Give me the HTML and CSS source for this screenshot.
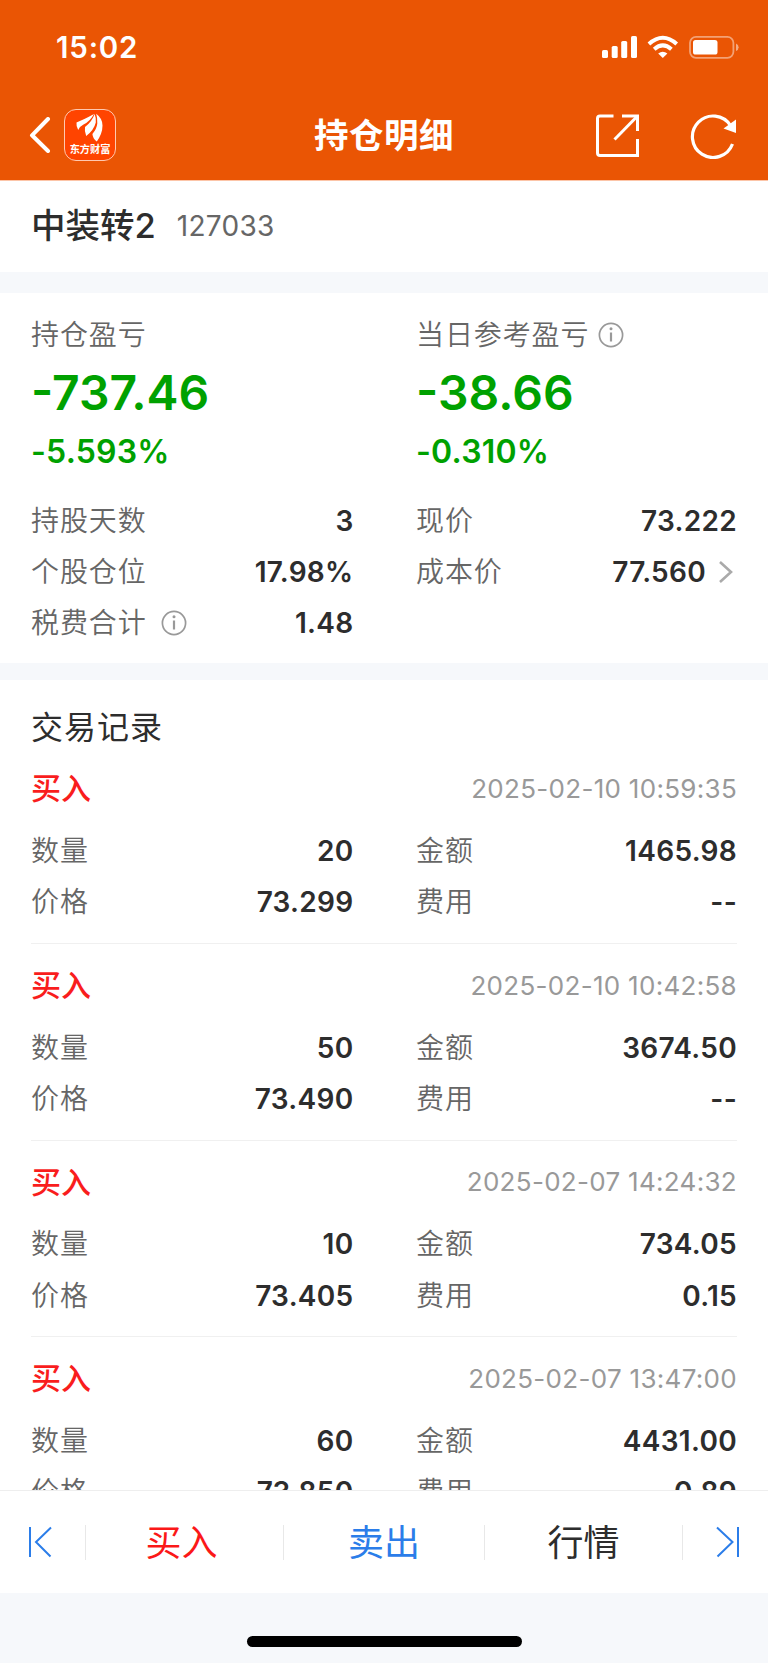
FILE: index.html
```html
<!DOCTYPE html>
<html lang="zh-CN">
<head>
    <meta charset="UTF-8">
    <meta name="viewport" content="width=device-width, initial-scale=1.0">
    <title>持仓明细</title>
    <link rel="stylesheet" href="styles.css">
</head>
<body>
    <div class="screen">
        <header class="header">
            <div class="status-bar">
                <span class="time">15:02</span>
                <svg class="status-icons" width="138" height="26" viewBox="0 0 138 26">
                    <g fill="#fff">
                        <rect x="0" y="15" width="6" height="8" rx="1.6"/>
                        <rect x="9.7" y="11" width="6" height="12" rx="1.6"/>
                        <rect x="19.2" y="6" width="6" height="17" rx="1.6"/>
                        <rect x="29" y="1" width="6" height="22" rx="1.6"/>
                        <path d="M60.8 23 L56.2 18.6 Q60.8 14.8 65.4 18.6 Z"/>
                        <rect x="91" y="5" width="24.5" height="14.6" rx="2.6"/>
                    </g>
                    <g fill="none" stroke="#fff" stroke-width="4">
                        <path d="M46.9 8.9 Q60.8 -3.4 74.7 8.9"/>
                        <path d="M52.2 14.2 Q60.8 6.6 69.4 14.2"/>
                    </g>
                    <rect x="88" y="1.8" width="43.4" height="21" rx="6" fill="none" stroke="#fff" stroke-opacity=".45" stroke-width="1.8"/>
                    <path d="M134 8.5 Q136.6 9.5 136.6 12.2 Q136.6 15 134 16 Z" fill="#fff" fill-opacity=".5"/>
                </svg>
            </div>
            <div class="nav">
                <div class="nav-left">
                    <svg class="back" width="22" height="36" viewBox="0 0 22 36" fill="none" stroke="#fff" stroke-width="4" stroke-linecap="round" stroke-linejoin="round">
                        <path d="M19 2 L3 18.3 L19 34"/>
                    </svg>
                    <div class="logo">
                        <svg width="28" height="29" viewBox="0 0 28 29" fill="#fff">
                            <path d="M.5 9.5 Q8 6.500 18 1 Q14 8.500 7.500 11.500 Q3.500 13.500 2.200 17 Q0 13.500 .5 9.500 Z"/>
                            <path d="M18.600 1 Q16.500 8 9 14 Q8.300 17.500 10.200 23 Q18 17 19.800 9.500 Q20.300 5 18.600 1 Z"/>
                            <path d="M20.200 .8 Q26.500 5.500 26.500 12.500 Q26.500 20.500 20.800 28.500 Q16.800 25.500 16.400 21 Q20.700 16 21.300 10.500 Q21.500 5 20.200 .8 Z"/>
                        </svg>
                        <span>东方财富</span>
                    </div>
                </div>
                <h1 class="title">持仓明细</h1>
                <div class="nav-right">
                    <svg width="46" height="46" viewBox="0 0 46 46" fill="none" stroke="#fff" stroke-width="3">
                        <path d="M19.5 3 H6 Q3.5 3 3.5 5.5 V40 Q3.5 42.5 6 42.5 H43.5 V26"/>
                        <path d="M28 3 H43.5 V18"/>
                        <path d="M43 3.5 L20.5 26.5"/>
                    </svg>
                    <svg width="48" height="46" viewBox="0 0 48 46">
                        <path d="M42.5 31 A20.7 20.7 0 1 1 40.5 12.5" fill="none" stroke="#fff" stroke-width="3.2"/>
                        <path d="M46 6.5 V20 L33.5 15.5 Z" fill="#fff"/>
                    </svg>
                </div>
            </div>
        </header>

        <section class="stock">
            <h2 class="stock-name">中装转2</h2>
            <span class="stock-code">127033</span>
        </section>

        <section class="summary">
            <div class="columns profit">
                <div>
                    <div class="label">持仓盈亏</div>
                    <div class="amount">-737.46</div>
                    <div class="percent">-5.593%</div>
                </div>
                <div>
                    <div class="label">当日参考盈亏
                        <svg class="info" width="26" height="26" viewBox="0 0 26 26"><circle cx="13" cy="13" r="11.6"/><path d="M13 10.5 V19.5"/><circle class="dot" cx="13" cy="6.8" r="1.5"/></svg>
                    </div>
                    <div class="amount">-38.66</div>
                    <div class="percent">-0.310%</div>
                </div>
            </div>
            <div class="columns">
                <div class="row"><span class="label">持股天数</span><span class="value">3</span></div>
                <div class="row"><span class="label">现价</span><span class="value">73.222</span></div>
                <div class="row"><span class="label">个股仓位</span><span class="value">17.98%</span></div>
                <div class="row">
                    <span class="label">成本价</span>
                    <span class="value link">77.560
                        <svg width="16" height="24" viewBox="0 0 16 24" fill="none" stroke="#aaa" stroke-width="2.6"><path d="M2 2 L13 12 L2 22"/></svg>
                    </span>
                </div>
                <div class="row">
                    <span class="label spaced">税费合计
                        <svg class="info" width="26" height="26" viewBox="0 0 26 26"><circle cx="13" cy="13" r="11.6"/><path d="M13 10.5 V19.5"/><circle class="dot" cx="13" cy="6.8" r="1.5"/></svg>
                    </span>
                    <span class="value">1.48</span>
                </div>
            </div>
        </section>

        <main class="records">
            <h2 class="records-title">交易记录</h2>
            <article class="record">
                <div class="record-head"><span class="buy">买入</span><time>2025-02-10 10:59:35</time></div>
                <div class="columns">
                    <div class="row"><span class="label">数量</span><span class="value">20</span></div>
                    <div class="row"><span class="label">金额</span><span class="value">1465.98</span></div>
                    <div class="row"><span class="label">价格</span><span class="value">73.299</span></div>
                    <div class="row"><span class="label">费用</span><span class="value">--</span></div>
                </div>
            </article>
            <article class="record">
                <div class="record-head"><span class="buy">买入</span><time>2025-02-10 10:42:58</time></div>
                <div class="columns">
                    <div class="row"><span class="label">数量</span><span class="value">50</span></div>
                    <div class="row"><span class="label">金额</span><span class="value">3674.50</span></div>
                    <div class="row"><span class="label">价格</span><span class="value">73.490</span></div>
                    <div class="row"><span class="label">费用</span><span class="value">--</span></div>
                </div>
            </article>
            <article class="record">
                <div class="record-head"><span class="buy">买入</span><time>2025-02-07 14:24:32</time></div>
                <div class="columns">
                    <div class="row"><span class="label">数量</span><span class="value">10</span></div>
                    <div class="row"><span class="label">金额</span><span class="value">734.05</span></div>
                    <div class="row"><span class="label">价格</span><span class="value">73.405</span></div>
                    <div class="row"><span class="label">费用</span><span class="value">0.15</span></div>
                </div>
            </article>
            <article class="record">
                <div class="record-head"><span class="buy">买入</span><time>2025-02-07 13:47:00</time></div>
                <div class="columns">
                    <div class="row"><span class="label">数量</span><span class="value">60</span></div>
                    <div class="row"><span class="label">金额</span><span class="value">4431.00</span></div>
                    <div class="row"><span class="label">价格</span><span class="value">73.850</span></div>
                    <div class="row"><span class="label">费用</span><span class="value">0.89</span></div>
                </div>
            </article>
        </main>

        <nav class="toolbar">
            <a class="tool prev">
                <svg width="26" height="32" viewBox="0 0 26 32"><path d="M3 1 V31 M24 1.5 L9 16 L23.5 30.5"/></svg>
            </a>
            <a class="tool tool-buy">买入</a>
            <a class="tool tool-sell">卖出</a>
            <a class="tool">行情</a>
            <a class="tool next">
                <svg width="26" height="32" viewBox="0 0 26 32"><path d="M23 1 V31 M2 1.5 L17.5 16 L2.5 30.5"/></svg>
            </a>
        </nav>
        <footer class="home-area">
            <div class="home-bar"></div>
        </footer>
    </div>
</body>
</html>
```
FILE: styles.css
```css
* {
    box-sizing: border-box;
}

body {
    margin: 0;
    background-color: #fff;
    color: #2d2d2d;
    font-family: Inter, "Noto Sans CJK SC", sans-serif;
}

h1, h2 {
    margin: 0;
}

svg {
    display: block;
    flex: none;
}

.screen {
    display: flex;
    flex-direction: column;
    width: 768px;
    height: 1663px;
    overflow: hidden;
}

/* header */
.header {
    flex: none;
    height: 181px;
    background-color: #ea5504;
    border-bottom: 1px solid #fcc5a8;
    color: #fff;
}

.status-bar {
    display: flex;
    justify-content: space-between;
    height: 90px;
    padding: 35px 28px 0 56px;
}

.time {
    font-size: 29.5px;
    font-weight: 600;
    line-height: 25px;
    letter-spacing: 0.8px;
}

.nav {
    display: grid;
    grid-template-columns: 1fr auto 1fr;
    align-items: center;
    height: 90px;
    padding: 0 30px 0 29px;
}

.nav-left {
    display: flex;
    align-items: center;
    gap: 13px;
}

.logo {
    display: flex;
    flex-direction: column;
    align-items: center;
    width: 52px;
    height: 52px;
    padding-top: 3px;
    border: 1px solid #ffc9b0;
    border-radius: 12px;
    background-color: #ff4400;
}

.logo span {
    font-family: "Noto Sans CJK SC", sans-serif;
    font-size: 10.2px;
    font-weight: 700;
    line-height: 13px;
    white-space: nowrap;
}

.title {
    padding: 2px 0 0 1px;
    font-size: 34.5px;
    font-weight: 600;
    line-height: 50px;
    letter-spacing: 0.5px;
}

.nav-right {
    display: flex;
    justify-content: flex-end;
    gap: 50px;
    padding-top: 2px;
}

/* stock name */
.stock {
    display: flex;
    flex: none;
    align-items: center;
    gap: 21px;
    height: 91px;
    padding: 0 31px 2px;
}

.stock-name {
    font-size: 34.5px;
    font-weight: 500;
    line-height: 50px;
}

.stock-code {
    color: #666;
    font-size: 28px;
    letter-spacing: 0.3px;
}

/* profit and position */
.summary {
    flex: none;
    height: 408px;
    padding: 19px 31px 0;
    border-top: 21px solid #f6f8fb;
    border-bottom: 17px solid #f6f8fb;
}

.columns {
    display: grid;
    grid-template-columns: 322.5px 321px;
    column-gap: 62.5px;
}

.profit {
    height: 182px;
}

.label {
    display: flex;
    align-items: center;
    gap: 9px;
    height: 44px;
    padding-bottom: 3px;
    color: #666;
    font-size: 28px;
    font-weight: 350;
    letter-spacing: 0.9px;
}

.spaced {
    gap: 14px;
}

.amount {
    height: 73px;
    color: #00a100;
    font-size: 48px;
    font-weight: 600;
    line-height: 73px;
}

.percent {
    color: #00a100;
    font-size: 32px;
    font-weight: 600;
    line-height: 45px;
    letter-spacing: 0.2px;
}

.info {
    position: relative;
    top: 2px;
    fill: none;
    stroke: #999;
    stroke-width: 1.7;
}

.info path {
    stroke-width: 2.2;
}

.info .dot {
    fill: #999;
    stroke: none;
}

.row {
    display: flex;
    align-items: center;
    justify-content: space-between;
    height: 51.3px;
    padding-top: 1px;
}

.value {
    padding-top: 1px;
    font-size: 28px;
    font-weight: 600;
    letter-spacing: 0.3px;
}

.link {
    display: flex;
    align-items: center;
    gap: 12px;
    padding-right: 3px;
}

/* trade records */
.records {
    flex: 1;
    min-height: 0;
    overflow: hidden;
    padding: 23px 31px 0;
}

.records-title {
    font-size: 32px;
    font-weight: 400;
    line-height: 50px;
    letter-spacing: 1px;
}

.record {
    height: 196.6px;
    padding-top: 17px;
    border-top: 1px solid #f0f0f0;
}

.record:first-of-type {
    height: 190px;
    padding-top: 11px;
    border-top: none;
}

.record-head {
    display: flex;
    align-items: center;
    justify-content: space-between;
    height: 48px;
    margin-bottom: 12px;
}

.buy {
    padding-bottom: 4px;
    color: #f91d1d;
    font-size: 30px;
    font-weight: 500;
}

time {
    color: #999;
    font-size: 26px;
    letter-spacing: 0.3px;
}

/* bottom toolbar */
.toolbar {
    display: grid;
    grid-template-columns: 86px 198px 201px 198px 85px;
    flex: none;
    align-items: center;
    height: 103px;
    border-top: 1px solid #eee;
    background-color: #fff;
}

.tool {
    display: flex;
    align-items: center;
    justify-content: center;
    height: 35px;
    padding-bottom: 4px;
    border-right: 1px solid #e8e8e8;
    font-size: 36px;
}

.tool svg {
    fill: none;
    stroke: #2b7de9;
    stroke-width: 2;
}

.prev {
    padding: 0 5px 0 0;
}

.next {
    padding: 0 0 0 4px;
    border-right: none;
}

.tool-buy {
    padding-right: 6px;
    color: #fb1818;
}

.tool-sell {
    color: #2b7de9;
}

.home-area {
    display: flex;
    flex: none;
    justify-content: center;
    height: 70px;
    padding-top: 43px;
    background-color: #f6f8fb;
}

.home-bar {
    width: 275px;
    height: 11px;
    border-radius: 6px;
    background-color: #000;
}
```
